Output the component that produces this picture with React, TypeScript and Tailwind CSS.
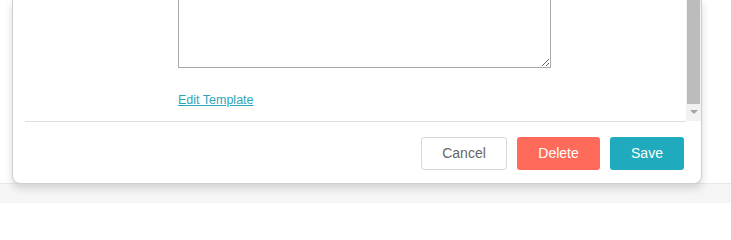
import React from "react";

export default function App() {
  return (
    <div className="w-[731px] h-[203px] bg-white flex flex-col overflow-hidden" style={{ fontFamily: '"Liberation Sans", Arial, sans-serif' }}>
      <div className="h-[184px] pl-[12px] relative z-10 shrink-0">
        <div className="w-[690px] h-[184px] bg-white border border-t-0 border-[#cfcfcf] rounded-b-[8px] shadow-[0_4px_8px_rgba(0,0,0,0.15)] flex flex-col">
          <div className="h-[121px] flex">
            <div className="flex-1 flex flex-col overflow-hidden">
              <div className="pl-[165px] -mt-[40px]">
                <textarea
                  className="block w-[373px] h-[108px] border border-[#a9a9a9] bg-white outline-none"
                  defaultValue=""
                />
              </div>
              <div className="pl-[165px] mt-[24px] leading-[14px]">
                <a href="#" className="text-[12.5px] leading-[14px] text-[#2ba6b9] underline font-['Liberation_Sans',Arial,sans-serif]">Edit Template</a>
              </div>
            </div>
            <div className="w-[15px] bg-[#f1f1f1] flex flex-col items-center">
              <div className="w-[13px] h-[104px] bg-[#bcbcbc]"></div>
              <div className="mt-[6px] w-0 h-0 border-l-[4px] border-r-[4px] border-t-[4px] border-l-transparent border-r-transparent border-t-[#a3a3a3]"></div>
            </div>
          </div>
          <div className="h-px bg-[#dddddd] ml-[12px] mr-[15px]"></div>
          <div className="flex-1 flex justify-end items-start pt-[15px] pr-[17px] gap-[10px]">
            <button className="w-[86px] h-[33px] border border-[#d9d9d9] rounded-[3px] bg-white text-[#666] text-[14px] font-['Liberation_Sans',Arial,sans-serif]">Cancel</button>
            <button className="w-[83px] h-[33px] rounded-[3px] bg-[#ff6b5a] text-white text-[14px] font-['Liberation_Sans',Arial,sans-serif]">Delete</button>
            <button className="w-[74px] h-[33px] rounded-[3px] bg-[#1faabd] text-white text-[14px] font-['Liberation_Sans',Arial,sans-serif]">Save</button>
          </div>
        </div>
      </div>
      <div className="flex-1 bg-[#f5f5f5] border-t border-[#e8e8e8] -mt-px"></div>
    </div>
  );
}
